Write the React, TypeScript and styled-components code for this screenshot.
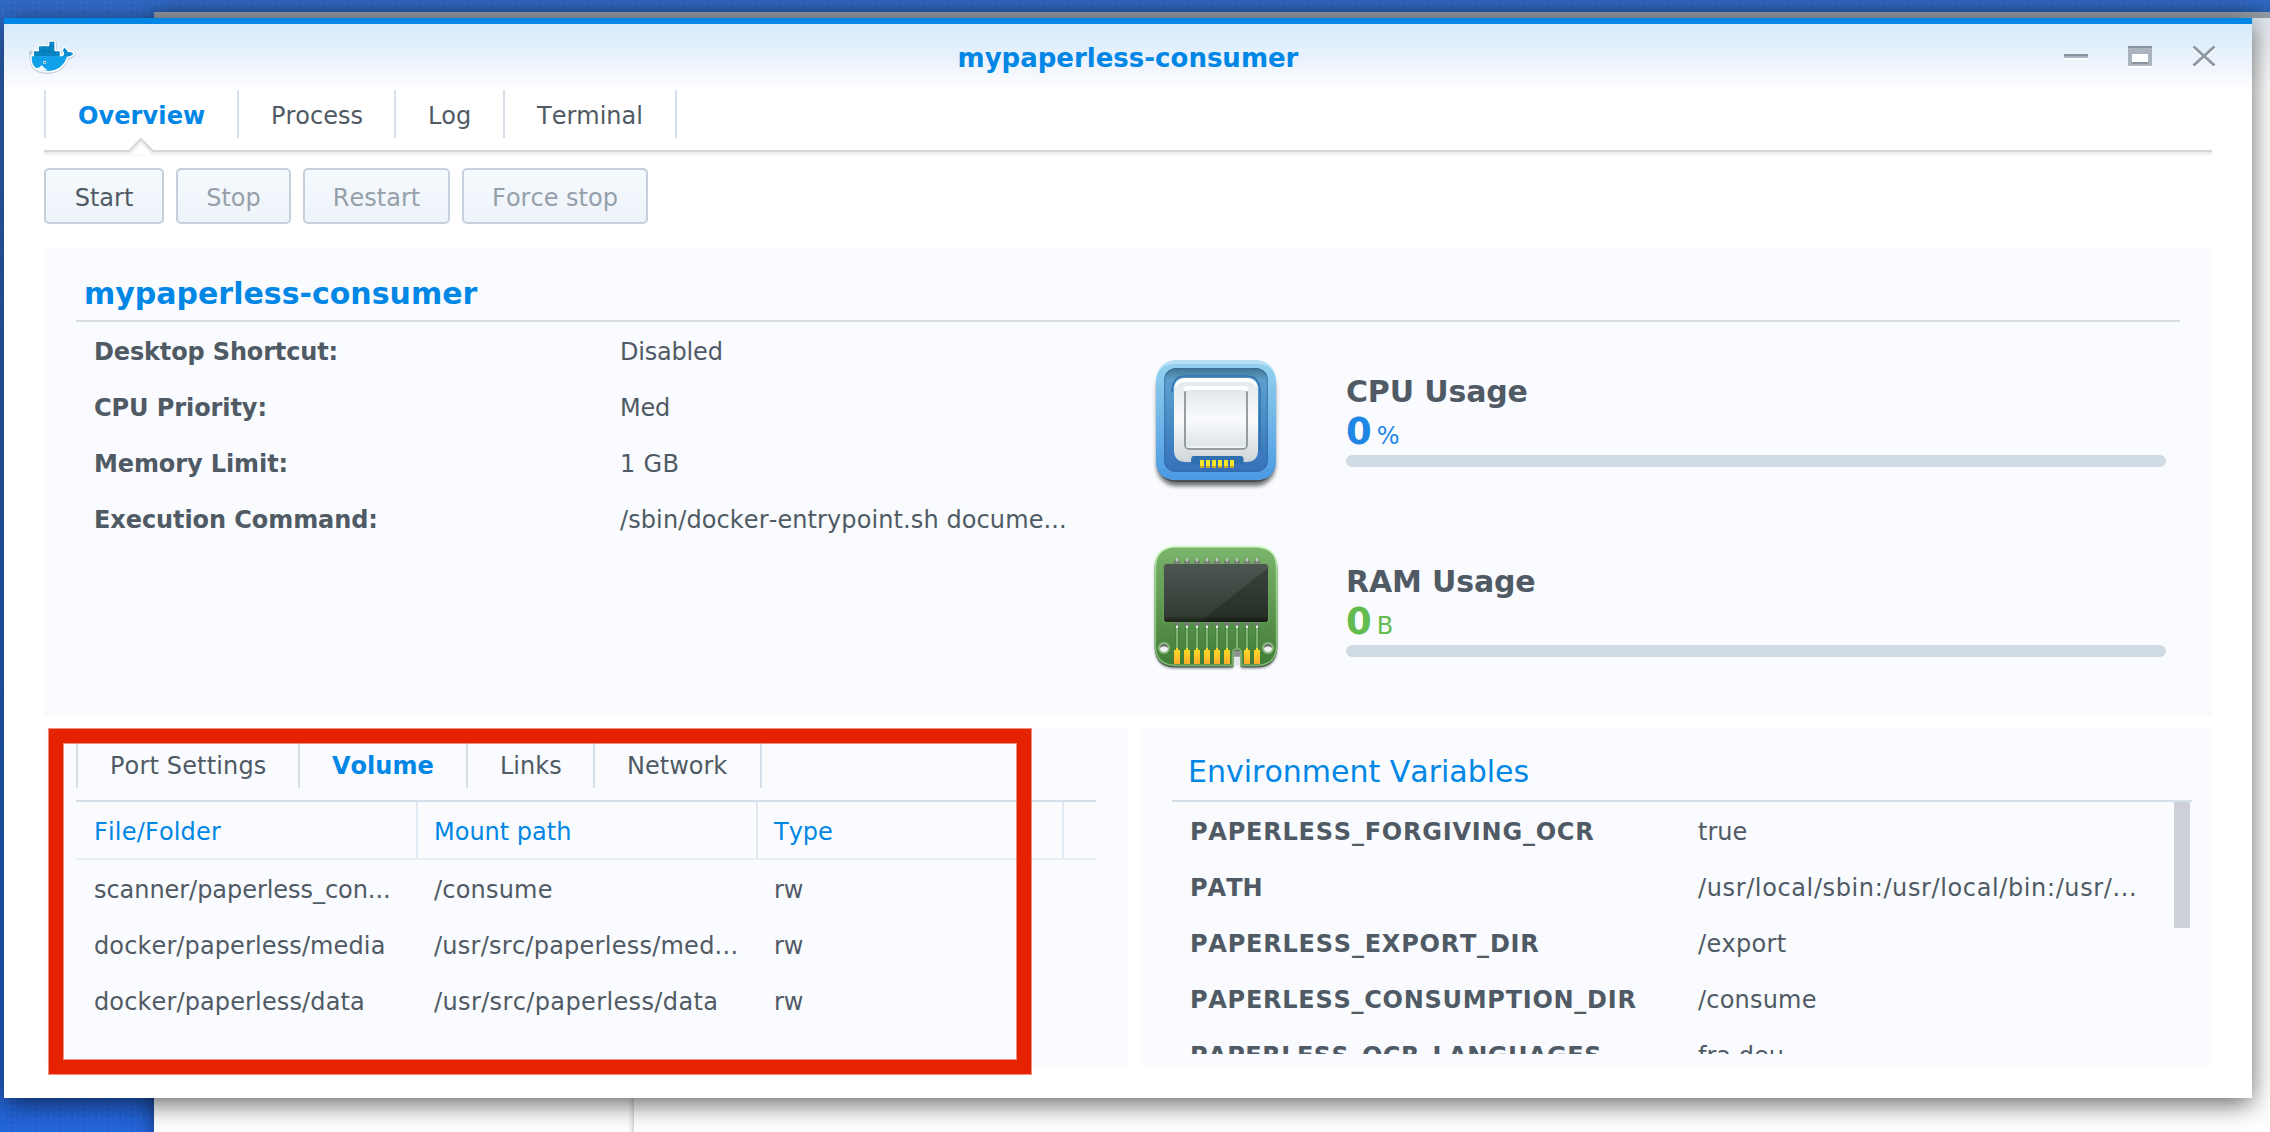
import React from "react";
import styled, { createGlobalStyle } from "styled-components";

const GlobalStyle = createGlobalStyle`
  * { box-sizing: border-box; }
  html, body { margin: 0; padding: 0; }
  body {
    width: 2270px;
    height: 1132px;
    overflow: hidden;
    font-family: "DejaVu Sans", Verdana, sans-serif;
    font-size: 24px;
    font-kerning: none;
    color: #505a64;
  }
`;

const Desktop = styled.div`
  position: relative;
  width: 2270px;
  height: 1132px;
  overflow: hidden;
  background:
    radial-gradient(circle at 3px 3px, rgba(255, 255, 255, 0.04) 1px, transparent 2px) 0 0 / 6px 6px,
    linear-gradient(180deg, #2f68c4 0%, #2a66c0 30%, #2264da 100%);
`;

const BackWindow = styled.div`
  position: absolute;
  left: 154px;
  top: 12px;
  right: 0;
  bottom: 0;
  display: flex;
  background: #fff;
  border-top: 6px solid #929ba5;
  box-shadow: 0 4px 20px rgba(0, 0, 0, 0.5);
`;

const BackSidebar = styled.div`
  width: 480px;
  background: linear-gradient(270deg, #d4d4d4 0, #e8e8e8 2px, #fff 6px);
`;

const BackContent = styled.div`
  flex: 1;
  background: linear-gradient(180deg, #dfe5ec 0, #fff 72px);
`;

const Window = styled.main`
  position: absolute;
  left: 4px;
  top: 18px;
  width: 2248px;
  height: 1080px;
  display: flex;
  flex-direction: column;
  padding: 0 40px;
  background: linear-gradient(180deg, #d7eafa 0, #e0effb 20px, #eef4fd 40px, #fff 68px);
  border-top: 6px solid #0086e5;
  box-shadow: 0 6px 24px rgba(0, 0, 0, 0.6);
`;

const TitleBar = styled.header`
  display: grid;
  grid-template-columns: 200px 1fr 200px;
  align-items: center;
  height: 66px;
  margin: 0 -40px;
`;

const AppIcon = styled.svg`
  width: 80px;
  height: 70px;
  margin: -4px 0 0 6px;
`;

const Title = styled.h1`
  margin: 0;
  padding-top: 2px;
  text-align: center;
  font-size: 26px;
  line-height: 64px;
  color: #0086e5;
`;

const WindowControls = styled.div`
  display: flex;
  justify-content: flex-end;
  gap: 40px;
  padding: 0 36px 2px 0;
  svg { width: 24px; height: 24px; display: block; }
`;

const TabBar = styled.nav`
  display: flex;
  height: 48px;
`;

const Tab = styled.button<{ $active?: boolean; $w: number; $ls?: number }>`
  display: block;
  width: ${(p) => p.$w}px;
  padding: 0 0 0 32px;
  border: 0;
  border-right: 2px solid #d6e0eb;
  background: none;
  text-align: left;
  font: inherit;
  font-kerning: none;
  font-weight: ${(p) => (p.$active ? 700 : 400)};
  line-height: 52px;
  white-space: nowrap;
  letter-spacing: ${(p) => p.$ls ?? 0}px;
  color: ${(p) => (p.$active ? "#0086e5" : "#505a64")};
  &:first-child { border-left: 2px solid #d6e0eb; }
`;

const TabEdge = styled.svg`
  display: block;
  flex: none;
  width: 2168px;
  height: 20px;
`;

const Toolbar = styled.div`
  display: flex;
  gap: 12px;
  margin-top: 10px;
  height: 56px;
`;

const ActionButton = styled.button<{ $w: number }>`
  width: ${(p) => p.$w}px;
  padding: 4px 0 0;
  border: 2px solid #c6d0dc;
  border-radius: 5px;
  background: linear-gradient(180deg, #f5faff, #eef3f9);
  font: inherit;
  font-kerning: none;
  line-height: 46px;
  color: #505a64;
  &:disabled { color: #96a0aa; }
`;

const Panel = styled.section`
  background: #f9fbff;
`;

const Overview = styled(Panel)`
  height: 468px;
  margin-top: 24px;
  padding: 14px 32px 0;
`;

const OverviewTitle = styled.h2`
  margin: 0;
  height: 60px;
  padding-left: 8px;
  border-bottom: 2px solid #d9dede;
  font-size: 30px;
  line-height: 64px;
  color: #0086e5;
`;

const OverviewBody = styled.div`
  display: flex;
`;

const InfoList = styled.div`
  width: 1070px;
  padding: 2px 0 0 18px;
`;

const Row = styled.div<{ $cols: string }>`
  display: grid;
  grid-template-columns: ${(p) => p.$cols};
  height: 56px;
  line-height: 56px;
  white-space: nowrap;
`;

const Label = styled.span<{ $ls?: number }>`
  font-weight: 700;
  letter-spacing: ${(p) => p.$ls ?? 0}px;
`;

const Value = styled.span<{ $ls?: number }>`
  letter-spacing: ${(p) => p.$ls ?? 0}px;
`;

const Meters = styled.div`
  padding-top: 28px;
`;

const Meter = styled.div`
  display: flex;
  gap: 60px;
  height: 190px;
`;

const MeterIcon = styled.svg`
  width: 140px;
  height: 140px;
`;

const MeterBody = styled.div`
  width: 820px;
  padding-top: 23px;
`;

const MeterName = styled.div`
  font-size: 30px;
  font-weight: 700;
  line-height: 38px;
  letter-spacing: -0.15px;
`;

const Reading = styled.div<{ $color: string }>`
  display: flex;
  align-items: baseline;
  gap: 5px;
  height: 44px;
  line-height: 42px;
  color: ${(p) => p.$color};
  b { font-size: 37px; }
`;

const Track = styled.div`
  height: 12px;
  border-radius: 6px;
  background: #d1dbe5;
`;

const Lower = styled.div`
  display: grid;
  grid-template-columns: 1084px 1072px;
  gap: 12px;
  height: 338px;
  margin-top: 12px;
`;

const VolumePanel = styled(Panel)`
  padding: 12px 32px 0;
`;

const TableHead = styled.div`
  display: grid;
  grid-template-columns: 342px 340px 306px;
  height: 60px;
  margin-top: 12px;
  border-top: 2px solid #d6e0eb;
  border-bottom: 2px solid #e8eff5;
`;

const HeadCell = styled.div<{ $ls?: number }>`
  padding: 2px 0 0 16px;
  border-right: 2px solid #e0e9f2;
  line-height: 56px;
  height: 56px;
  letter-spacing: ${(p) => p.$ls ?? 0}px;
  color: #0086e5;
  &:first-child { padding-left: 18px; }
`;

const TableBody = styled.div`
  padding: 2px 0 0 18px;
`;

const EnvPanel = styled(Panel)`
  padding: 12px 20px 0 32px;
`;

const EnvTitle = styled.h3`
  margin: 0;
  height: 62px;
  padding-left: 16px;
  border-bottom: 2px solid #d6e0eb;
  font-size: 30px;
  font-weight: 400;
  line-height: 64px;
  color: #0086e5;
`;

const EnvBody = styled.div`
  display: flex;
  justify-content: space-between;
  height: 252px;
  padding-right: 2px;
  overflow: hidden;
`;

const EnvRows = styled.div`
  padding: 2px 0 0 18px;
`;

const ScrollThumb = styled.div`
  width: 16px;
  height: 126px;
  background: #cdd0d6;
`;

const Highlight = styled.div`
  position: absolute;
  left: 49px;
  top: 729px;
  width: 982px;
  height: 345px;
  border: 14px solid #e62300;
  box-shadow: 0 0 0 1px rgba(230, 35, 0, 0.5), inset 0 0 0 1px rgba(230, 35, 0, 0.5);
`;

const DockerIcon = () => (
  <AppIcon viewBox="0 0 240 210">
    <g fill="#9aa7b3" stroke="#9aa7b3" strokeWidth="12" strokeLinejoin="round" opacity="0.45" transform="translate(0 3)">
      <path d="M118 64h16v15h0v15h15v15H63v-15h8h16V79h31z" />
      <path d="M65 109H157Q164 106 162 98Q157 90 163 83Q172 89 173 97Q181 94 190 101Q184 109 171 110C162 136 143 153 112 153C82 153 63 140 65 109Z" />
    </g>
    <g fill="#fff" stroke="#fff" strokeWidth="9" strokeLinejoin="round">
      <path d="M118 65h15v14v15h15v15H72V94h15V79h31z" />
      <path d="M65 109H157Q164 106 162 98Q157 90 163 83Q172 89 173 97Q181 94 190 101Q184 109 171 110C162 136 143 153 112 153C82 153 63 140 65 109Z" />
    </g>
    <path d="M118 65h15v29h16v16H72V94h15V79h31z" fill="#0986c6" />
    <path d="M118 79h15M87 94h47M87 94v15M102.500 79v30M118 79v30M133.500 94v15" stroke="#0670aa" strokeWidth="1.600" fill="none" />
    <path d="M65 109H157Q164 106 162 98Q157 90 163 83Q172 89 173 97Q181 94 190 101Q184 109 171 110C162 136 143 153 112 153C82 153 63 140 65 109Z" fill="#109fe9" />
    <path d="M157 109Q164 106 162 98Q157 90 163 83Q172 89 173 97Q181 94 190 101Q184 109 165 108L158 112Z" fill="#0982c0" opacity="0.6" />
    <path d="M77 144C86 145 90 141 95 135C101 143 108 148 115 151C100 154 85 152 77 144Z" fill="#f2f8fc" />
    <circle cx="104" cy="127" r="5" fill="#eaf5fb" />
    <circle cx="104.500" cy="127.500" r="2.500" fill="#24506c" />
  </AppIcon>
);

const CpuIcon = () => (
  <MeterIcon viewBox="48 30 420 420">
    <defs>
      <linearGradient id="cpuOuter" x1="0" y1="0" x2="0" y2="1">
        <stop offset="0" stopColor="#93d0ee" />
        <stop offset="1" stopColor="#4b9ae2" />
      </linearGradient>
      <linearGradient id="cpuWell" x1="0" y1="0" x2="0" y2="1">
        <stop offset="0" stopColor="#447491" />
        <stop offset="0.120" stopColor="#5ba0cd" />
        <stop offset="0.500" stopColor="#4a8dc6" />
        <stop offset="1" stopColor="#3570b9" />
      </linearGradient>
      <linearGradient id="cpuCap" x1="0" y1="0" x2="0" y2="1">
        <stop offset="0" stopColor="#e2e8eb" />
        <stop offset="0.500" stopColor="#fafbfd" />
        <stop offset="1" stopColor="#cfd6da" />
      </linearGradient>
      <linearGradient id="cpuDie" x1="0" y1="0" x2="0" y2="1">
        <stop offset="0" stopColor="#e1e7ea" />
        <stop offset="0.500" stopColor="#fafbfe" />
        <stop offset="0.950" stopColor="#dfe6ea" />
        <stop offset="1" stopColor="#f7f9fa" />
      </linearGradient>
      <filter id="cpuShadow" x="-20%" y="-20%" width="140%" height="140%">
        <feGaussianBlur stdDeviation="6" />
      </filter>
    </defs>
    <rect x="80" y="84" width="356" height="354" rx="60" fill="#000" opacity="0.550" filter="url(#cpuShadow)" />
    <rect x="79" y="80" width="358" height="346" rx="60" fill="#40494f" opacity="0.850" />
    <rect x="78" y="60" width="360" height="360" rx="60" fill="#b6dff5" />
    <path d="M78 132Q78 72 138 72H378Q438 72 438 132V360Q438 420 378 420H138Q78 420 78 360Z" fill="url(#cpuOuter)" />
    <rect x="102" y="84" width="312" height="312" rx="36" fill="url(#cpuWell)" />
    <rect x="104" y="86" width="308" height="308" rx="34" fill="none" stroke="#2d689f" strokeWidth="4" opacity="0.450" />
    <path d="M126 156Q126 108 168 108H348Q390 108 390 156V330" fill="none" stroke="#2b67a5" strokeWidth="5" opacity="0.700" />
    <path d="M132 152Q132 114 168 114H348Q384 114 384 152V330Q384 366 348 366H340V356Q340 348 332 348H192Q184 348 184 358V366H168Q132 366 132 330Z" fill="url(#cpuCap)" />
    <path d="M132 152Q132 114 168 114H348Q384 114 384 152Q380 126 348 126H168Q136 126 132 152Z" fill="#fff" />
    <path d="M184 372V358Q184 348 194 348H330Q340 348 340 358V372" fill="#2e6fb0" />
    <rect x="162" y="138" width="192" height="192" rx="15" fill="#969da2" />
    <path d="M162 154V147Q162 138 172 138H344Q354 138 354 147V154Z" fill="#fff" />
    <rect x="168" y="150" width="180" height="174" rx="7" fill="url(#cpuDie)" />
    {[210, 228, 246, 264, 282, 300].map((x) => (
      <g key={x}>
        <rect x={x} y="360" width="12" height="18" fill="#ffe629" />
        <rect x={x} y="378" width="12" height="6" fill="#c8a52c" />
      </g>
    ))}
  </MeterIcon>
);

const ramBoard =
  "M133 620H383Q440 624 440 682V916Q440 974 382 976H334V940Q334 927 321 927Q308 927 308 940V976H133Q76 974 76 916V682Q76 624 133 620Z";

const RamIcon = () => (
  <MeterIcon viewBox="48 600 420 420">
    <defs>
      <linearGradient id="ramBoard" x1="0" y1="0" x2="0" y2="1">
        <stop offset="0" stopColor="#7bb46c" />
        <stop offset="1" stopColor="#417c37" />
      </linearGradient>
      <linearGradient id="ramRim" x1="0" y1="0" x2="0" y2="1">
        <stop offset="0" stopColor="#d3fbc8" />
        <stop offset="0.200" stopColor="#9ddb90" />
        <stop offset="1" stopColor="#79b56e" />
      </linearGradient>
      <linearGradient id="ramChip" x1="0" y1="0" x2="0" y2="1">
        <stop offset="0" stopColor="#4d5650" />
        <stop offset="0.900" stopColor="#333b35" />
        <stop offset="0.940" stopColor="#242c23" />
        <stop offset="1" stopColor="#1b2619" />
      </linearGradient>
      <linearGradient id="ramPin" x1="0" y1="0" x2="0" y2="1">
        <stop offset="0" stopColor="#ffdf26" />
        <stop offset="1" stopColor="#ffac2a" />
      </linearGradient>
      <filter id="ramShadow" x="-20%" y="-20%" width="140%" height="140%">
        <feGaussianBlur stdDeviation="5" />
      </filter>
    </defs>
    <path d={ramBoard} transform="translate(0 8)" fill="#000" opacity="0.600" filter="url(#ramShadow)" />
    <path d={ramBoard} transform="translate(0 4)" fill="#3d4b3d" stroke="#3d4b3d" strokeWidth="4" opacity="0.800" />
    <path d={ramBoard} fill="url(#ramBoard)" stroke="url(#ramRim)" strokeWidth="5" />
    {[141, 171, 201, 231, 261, 291, 321, 351, 381].map((x) => (
      <g key={x}>
        <path d={`M${x - 9} 671v-9h6v-7h6v7h6v9z`} fill="#76777a" />
        <rect x={x - 2.5} y="654" width="5" height="11" fill="#c9cfcb" />
        <path d={`M${x - 4} 860V926M${x + 4} 860V926`} stroke="#3e7d3b" strokeWidth="2" />
        <rect x={x - 3} y="858" width="6" height="70" fill="#7fb375" />
        <path d={`M${x - 9} 846h18v8h-6v6h-6v-6h-6z`} fill="#77787b" />
        <rect x={x - 3} y="857" width="6" height="7" fill="#e8efe8" />
        {x !== 321 && <path d={`M${x - 9} 930h6v-6h6v6h6v42h-18z`} fill="url(#ramPin)" />}
      </g>
    ))}
    <rect x="96" y="668" width="324" height="182" rx="12" fill="#67a05a" opacity="0.550" />
    <rect x="102" y="672" width="312" height="174" rx="10" fill="url(#ramChip)" />
    <path d="M414 684V836Q414 846 404 846H208Z" fill="#0b120b" opacity="0.280" />
    <path d="M308 976V940Q308 927 321 927Q334 927 334 940V976" fill="none" stroke="#76aa6c" strokeWidth="5" />
    <path d="M312 978V943Q312 932 321 932Q330 932 330 943V978Z" fill="#e5e8eb" />
    <path d="M312 950V943Q312 932 321 932Q330 932 330 943V950Z" fill="#8c918f" />
    {[102, 414].map((x) => (
      <g key={x}>
        <circle cx={x} cy="924" r="15" fill="#eef1f3" stroke="#8cba84" strokeWidth="6" />
        <path d={`M${x - 12} 924A12 12 0 0 1 ${x + 12} 924Q${x} 913 ${x - 12} 924Z`} fill="#666d69" />
      </g>
    ))}
  </MeterIcon>
);

type Cell = { text: string; ls?: number };

const info: [Cell, Cell][] = [
  [{ text: "Desktop Shortcut:", ls: -0.15 }, { text: "Disabled", ls: -0.2 }],
  [{ text: "CPU Priority:", ls: -0.08 }, { text: "Med", ls: -0.2 }],
  [{ text: "Memory Limit:", ls: -0.1 }, { text: "1 GB", ls: 0.3 }],
  [{ text: "Execution Command:", ls: -0.08 }, { text: "/sbin/docker-entrypoint.sh docume...", ls: 0.1 }],
];

const volumes: Cell[][] = [
  [{ text: "scanner/paperless_con...", ls: -0.05 }, { text: "/consume", ls: 0.2 }, { text: "rw" }],
  [{ text: "docker/paperless/media", ls: 0.12 }, { text: "/usr/src/paperless/med...", ls: 0.25 }, { text: "rw" }],
  [{ text: "docker/paperless/data", ls: 0.13 }, { text: "/usr/src/paperless/data", ls: 0.37 }, { text: "rw" }],
];

const env: [Cell, Cell][] = [
  [{ text: "PAPERLESS_FORGIVING_OCR", ls: 0.78 }, { text: "true" }],
  [{ text: "PATH" }, { text: "/usr/local/sbin:/usr/local/bin:/usr/...", ls: 0.62 }],
  [{ text: "PAPERLESS_EXPORT_DIR", ls: 0.78 }, { text: "/export", ls: 0.3 }],
  [{ text: "PAPERLESS_CONSUMPTION_DIR", ls: 0.73 }, { text: "/consume", ls: 0.2 }],
  [{ text: "PAPERLESS_OCR_LANGUAGES", ls: 0.5 }, { text: "fra deu" }],
];

export default function App() {
  return (
    <Desktop>
      <GlobalStyle />
      <BackWindow>
        <BackSidebar />
        <BackContent />
      </BackWindow>
      <Window>
        <TitleBar>
          <DockerIcon />
          <Title>mypaperless-consumer</Title>
          <WindowControls>
            <svg viewBox="0 0 24 24">
              <path d="M0 10h24v4H0z" fill="#aab5bf" />
              <path d="M0 10h24v2H0z" fill="#8a949e" />
              <path d="M0 14h24v2H0z" fill="#fff" />
            </svg>
            <svg viewBox="0 0 24 24">
              <path d="M0 22h24v2H0z" fill="#fff" />
              <path d="M0 2h24v20H0z" fill="#aab5bf" />
              <path d="M0 2h24v2H0zM4 18h16v2H4z" fill="#8a949e" />
              <path d="M4 10h16v8H4z" fill="#fff" />
            </svg>
            <svg viewBox="0 0 24 24">
              <path d="M1 3.500L23 23M23 3.500L1 23" stroke="#fff" strokeWidth="3.500" />
              <path d="M1.500 2.500L22.500 21.500M22.500 2.500L1.500 21.500" stroke="#8f99a3" strokeWidth="3" />
            </svg>
          </WindowControls>
        </TitleBar>
        <TabBar>
          <Tab $active $w={195} $ls={0.1}>Overview</Tab>
          <Tab $w={157}>Process</Tab>
          <Tab $w={109}>Log</Tab>
          <Tab $w={172}>Terminal</Tab>
        </TabBar>
        <TabEdge viewBox="0 0 2168 20">
          <g fill="none">
            <path d="M0 17H2168" stroke="#fafafa" strokeWidth="2" />
            <path d="M0 15H86L97 4L108 15H2168" stroke="#efefef" strokeWidth="2.500" />
            <path d="M0 13H85L97 1L109 13H2168" stroke="#d6d6d6" strokeWidth="2" />
          </g>
        </TabEdge>
        <Toolbar>
          <ActionButton $w={120}>Start</ActionButton>
          <ActionButton $w={115} disabled>Stop</ActionButton>
          <ActionButton $w={147} disabled>Restart</ActionButton>
          <ActionButton $w={186} disabled>Force stop</ActionButton>
        </Toolbar>
        <Overview>
          <OverviewTitle>mypaperless-consumer</OverviewTitle>
          <OverviewBody>
            <InfoList>
              {info.map(([k, v]) => (
                <Row key={k.text} $cols="526px 1fr">
                  <Label $ls={k.ls}>{k.text}</Label>
                  <Value $ls={v.ls}>{v.text}</Value>
                </Row>
              ))}
            </InfoList>
            <Meters>
              <Meter>
                <CpuIcon />
                <MeterBody>
                  <MeterName>CPU Usage</MeterName>
                  <Reading $color="#1f87e3"><b>0</b>%</Reading>
                  <Track />
                </MeterBody>
              </Meter>
              <Meter>
                <RamIcon />
                <MeterBody>
                  <MeterName>RAM Usage</MeterName>
                  <Reading $color="#64bc50"><b>0</b>B</Reading>
                  <Track />
                </MeterBody>
              </Meter>
            </Meters>
          </OverviewBody>
        </Overview>
        <Lower>
          <VolumePanel>
            <TabBar>
              <Tab $w={224} $ls={0.15}>Port Settings</Tab>
              <Tab $active $w={168}>Volume</Tab>
              <Tab $w={127}>Links</Tab>
              <Tab $w={167}>Network</Tab>
            </TabBar>
            <TableHead>
              <HeadCell $ls={0.18}>File/Folder</HeadCell>
              <HeadCell>Mount path</HeadCell>
              <HeadCell>Type</HeadCell>
            </TableHead>
            <TableBody>
              {volumes.map((cells) => (
                <Row key={cells[0].text} $cols="340px 340px 1fr">
                  {cells.map((c) => (
                    <Value key={c.text} $ls={c.ls}>{c.text}</Value>
                  ))}
                </Row>
              ))}
            </TableBody>
          </VolumePanel>
          <EnvPanel>
            <EnvTitle>Environment Variables</EnvTitle>
            <EnvBody>
              <EnvRows>
                {env.map(([k, v]) => (
                  <Row key={k.text} $cols="508px 460px">
                    <Label $ls={k.ls}>{k.text}</Label>
                    <Value $ls={v.ls}>{v.text}</Value>
                  </Row>
                ))}
              </EnvRows>
              <ScrollThumb />
            </EnvBody>
          </EnvPanel>
        </Lower>
      </Window>
      <Highlight />
    </Desktop>
  );
}
